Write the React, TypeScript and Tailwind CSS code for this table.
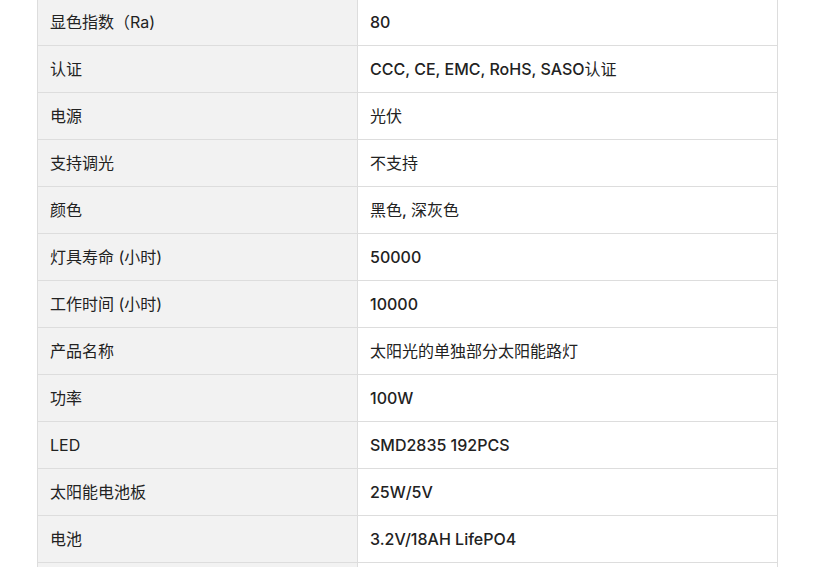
import React from 'react';

// Spec rows as shown in the product table
const ROWS: [string, string][] = [
  ['显色指数（Ra)', '80'],
  ['认证', 'CCC, CE, EMC, RoHS, SASO认证'],
  ['电源', '光伏'],
  ['支持调光', '不支持'],
  ['颜色', '黑色, 深灰色'],
  ['灯具寿命 (小时)', '50000'],
  ['工作时间 (小时)', '10000'],
  ['产品名称', '太阳光的单独部分太阳能路灯'],
  ['功率', '100W'],
  ['LED', 'SMD2835 192PCS'],
  ['太阳能电池板', '25W/5V'],
  ['电池', '3.2V/18AH LifePO4'],
  ['', ''],
];

// Latin runs render medium, CJK runs stay regular
function Value({ text }: { text: string }) {
  const parts = text.split(/([\u3000-\u9fff\uff00-\uffef]+)/).filter(Boolean);
  return (
    <>
      {parts.map((p, i) =>
        /[\u3000-\u9fff\uff00-\uffef]/.test(p) ? (
          <span key={i} className="font-normal">{p}</span>
        ) : (
          <span key={i} className="font-medium">{p}</span>
        )
      )}
    </>
  );
}

export default function App() {
  return (
    <div
      className="w-[817px] h-[567px] overflow-hidden bg-white"
      style={{ fontFamily: "Inter, 'Noto Sans CJK SC', sans-serif" }}
    >
      <table className="ml-[37px] mt-[-2px] w-[741px] border-collapse text-[16px] text-[#222]">
        <tbody>
          {ROWS.map(([label, value], idx) => (
            <tr key={idx} className="h-[47px]">
              <td className="w-[320px] border border-[#dddddd] bg-[#f2f2f2] px-3 align-middle font-normal">
                {label}
              </td>
              <td className="border border-[#dddddd] bg-white px-3 align-middle">
                <Value text={value} />
              </td>
            </tr>
          ))}
        </tbody>
      </table>
    </div>
  );
}
